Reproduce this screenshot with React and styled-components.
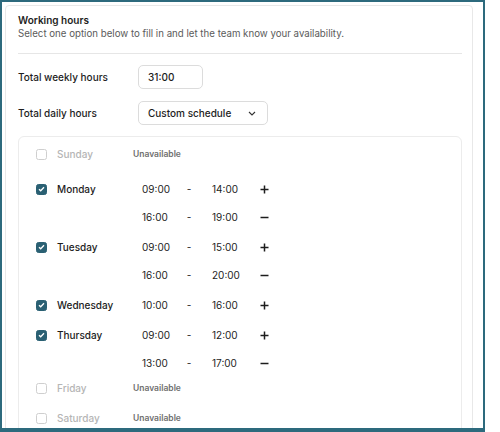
import React from 'react'
import styled, { createGlobalStyle } from 'styled-components'

const GlobalStyle = createGlobalStyle`
    body {
        margin: 0;
        background: #ffffff;
        font-family: 'Inter', 'Noto Sans', sans-serif;
        color: #1d1d1d;
    }
`

const days = [
    { name: 'Sunday', slots: [] },
    { name: 'Monday', slots: [['09:00', '14:00'], ['16:00', '19:00']] },
    { name: 'Tuesday', slots: [['09:00', '15:00'], ['16:00', '20:00']] },
    { name: 'Wednesday', slots: [['10:00', '16:00']] },
    { name: 'Thursday', slots: [['09:00', '12:00'], ['13:00', '17:00']] },
    { name: 'Friday', slots: [] },
    { name: 'Saturday', slots: [] },
]

function Plus() {
    return (
        <svg width="9" height="9" viewBox="0 0 9 9">
            <path d="M4.5 0.5v8M0.5 4.5h8" stroke="#1d1d1d" strokeWidth="1.5" />
        </svg>
    )
}

function Minus() {
    return (
        <svg width="9" height="9" viewBox="0 0 9 9">
            <path d="M0.5 4.5h8" stroke="#1d1d1d" strokeWidth="1.5" />
        </svg>
    )
}

function Chevron() {
    return (
        <svg width="8" height="5" viewBox="0 0 8 5">
            <path d="M1 1l3 3 3-3" stroke="#333" strokeWidth="1.1" fill="none" />
        </svg>
    )
}

function Tick() {
    return (
        <svg width="7" height="6" viewBox="0 0 7 6">
            <path d="M1 3.2l1.7 1.6L6 1.2" stroke="#fff" strokeWidth="1.3" fill="none" />
        </svg>
    )
}

export default function App() {
    return (
        <>
            <GlobalStyle />
            <Frame>
                <Card>
                    <Title>Working hours</Title>
                    <Subtitle>Select one option below to fill in and let the team know your availability.</Subtitle>
                    <Divider />
                    <Field>
                        <Label>Total weekly hours</Label>
                        <TextBox>31:00</TextBox>
                    </Field>
                    <Field>
                        <Label>Total daily hours</Label>
                        <SelectBox>Custom schedule<Chevron /></SelectBox>
                    </Field>
                    <Panel>
                        {days.map(day => {
                            const off = day.slots.length === 0
                            return (
                                <Day key={day.name} $off={off}>
                                    <Head $off={off}>
                                        <Check $on={!off}>{!off && <Tick />}</Check>
                                        <DayName $off={off}>{day.name}</DayName>
                                    </Head>
                                    <Slots>
                                        {off && <Unavailable>Unavailable</Unavailable>}
                                        {day.slots.map(([from, to], i) => (
                                            <Slot key={from}>
                                                <Time>{from}</Time>
                                                <Dash>-</Dash>
                                                <Time>{to}</Time>
                                                <Action>{i === 0 ? <Plus /> : <Minus />}</Action>
                                            </Slot>
                                        ))}
                                    </Slots>
                                </Day>
                            )
                        })}
                    </Panel>
                </Card>
            </Frame>
        </>
    )
}

const Frame = styled.div`
    width: 485px;
    height: 432px;
    box-sizing: border-box;
    border: 2px solid #2d6a7d;
    border-bottom-width: 4px;
    padding: 3px 0 0 3px;
    overflow: hidden;
    background: #fff;
`
const Card = styled.div`
    width: 468px;
    box-sizing: border-box;
    border: 1px solid #e8e8e8;
    border-radius: 4px;
    padding: 7px 10px 0 12px;
`
const Title = styled.div`
    font-size: 10px;
    line-height: 14px;
    font-weight: 600;
    color: #1d1d1d;
`
const Subtitle = styled.div`
    font-size: 9.7px;
    line-height: 14px;
    color: #5b5b5b;
    white-space: nowrap;
`
const Divider = styled.div`
    height: 1px;
    background: #e6e6e6;
    margin: 12px 0 11px;
`
const Field = styled.div`
    display: flex;
    align-items: center;
    height: 24px;
    margin-bottom: 12px;
`
const Label = styled.div`
    width: 120px;
    font-size: 10px;
    font-weight: 500;
    color: #1d1d1d;
`
const TextBox = styled.div`
    width: 65px;
    height: 24px;
    box-sizing: border-box;
    border: 1px solid #dcdcdc;
    border-radius: 5px;
    padding-left: 9px;
    display: flex;
    align-items: center;
    font-size: 10px;
    font-weight: 500;
`
const SelectBox = styled(TextBox)`
    width: 130px;
    justify-content: space-between;
    padding-right: 11px;
`
const Panel = styled.div`
    margin-top: -1px;
    border: 1px solid #ececec;
    border-radius: 6px;
    padding: 8px 0 40px 17px;
    display: flex;
    flex-direction: column;
    gap: 2px;
`
const Day = styled.div`
    display: flex;
    padding-bottom: ${p => (p.$off ? '10px' : '0')};
`
const Head = styled.div`
    width: 97px;
    height: ${p => (p.$off ? '18px' : '28px')};
    display: flex;
    align-items: center;
    gap: 10px;
`
const Check = styled.div`
    width: 11px;
    height: 11px;
    box-sizing: border-box;
    border-radius: 2.5px;
    border: 1px solid ${p => (p.$on ? '#2a6073' : '#cfcfcf')};
    background: ${p => (p.$on ? '#2a6073' : '#fff')};
    display: flex;
    align-items: center;
    justify-content: center;
`
const DayName = styled.div`
    font-size: 10px;
    font-weight: 500;
    color: ${p => (p.$off ? '#b5b5b5' : '#1d1d1d')};
`
const Slots = styled.div`
    display: flex;
    flex-direction: column;
`
const Unavailable = styled.div`
    height: 18px;
    line-height: 18px;
    font-size: 8.5px;
    font-weight: 600;
    color: #6f6f6f;
`
const Slot = styled.div`
    height: 28px;
    display: flex;
    align-items: center;
    padding-left: 9px;
`
const Time = styled.div`
    width: 42px;
    font-size: 10px;
    color: #1d1d1d;
`
const Dash = styled.div`
    width: 10px;
    margin-right: 18px;
    text-align: center;
    font-size: 10px;
    color: #1d1d1d;
`
const Action = styled.div`
    margin-left: 6px;
    display: flex;
    align-items: center;
`
